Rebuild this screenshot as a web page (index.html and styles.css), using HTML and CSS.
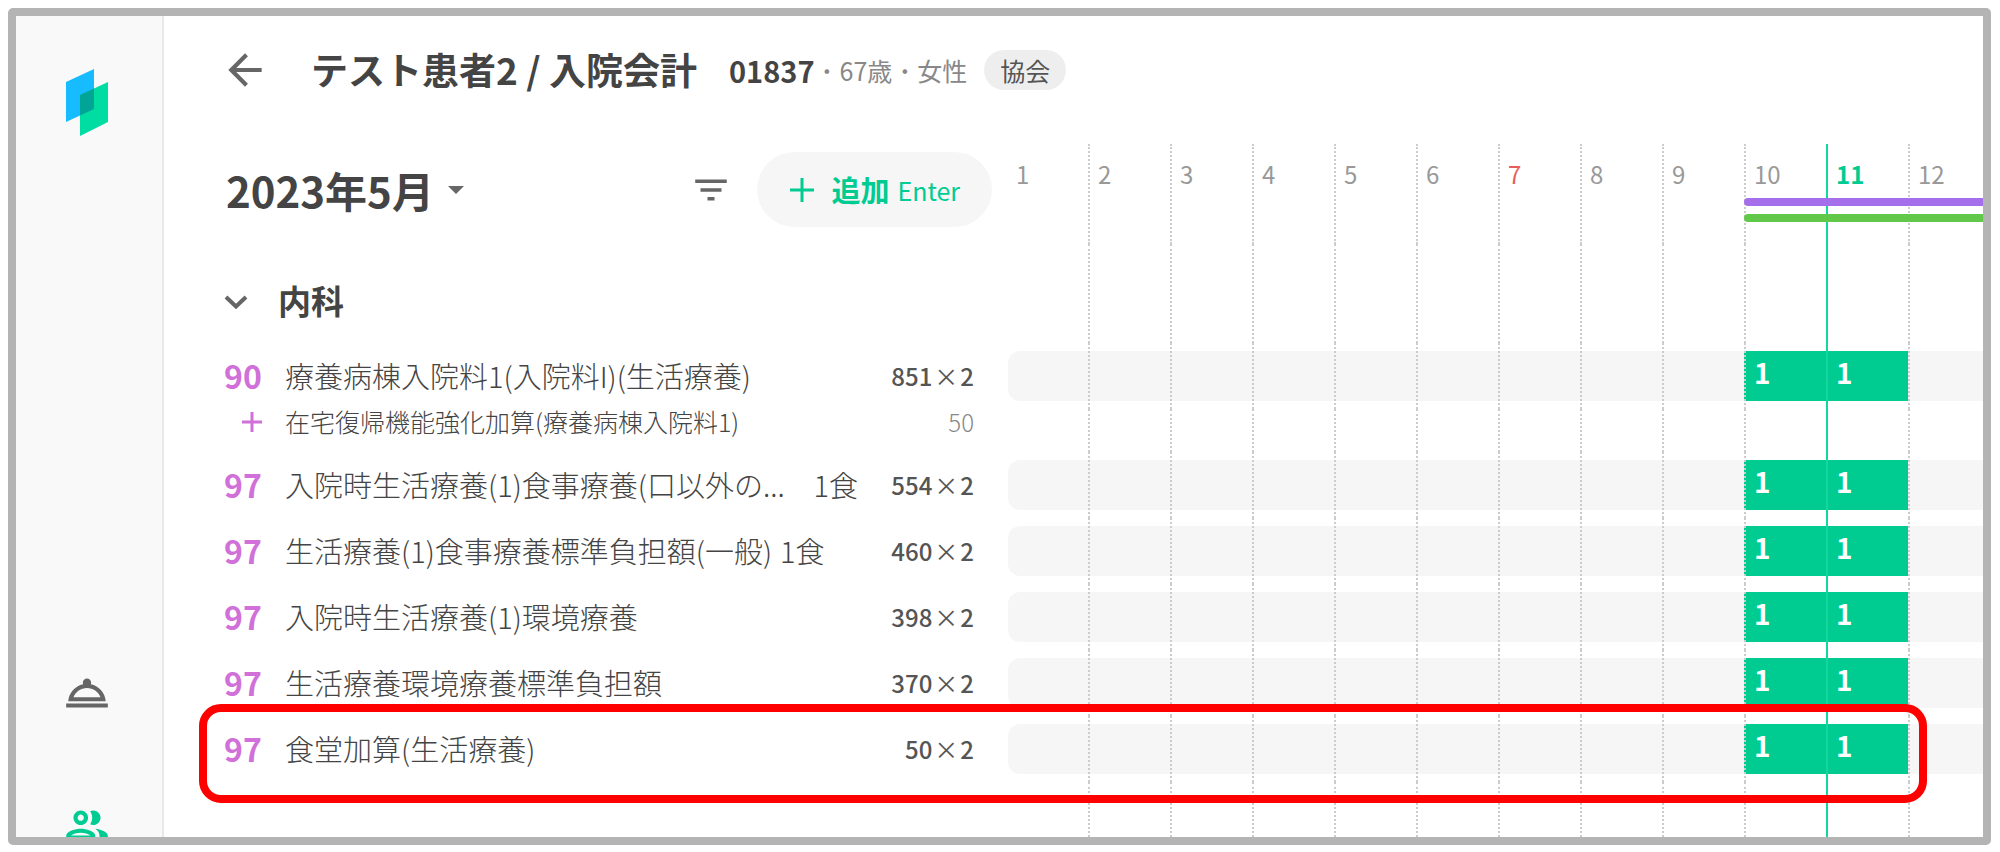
FILE: index.html
```
<!DOCTYPE html>
<html lang="ja">
  <head>
    <meta charset="UTF-8" />
    <meta name="viewport" content="width=device-width, initial-scale=1.0" />
    <title>入院会計</title>
    <link rel="stylesheet" href="styles.css">
  </head>
  <body>
    <div class="window">
      <aside class="sidebar">
        <svg class="logo" viewBox="0 0 42 67">
          <path d="M0 13L28 0v40L0 53z" fill="#17bbff" />
          <path d="M14 26L42 13v40L14 67z" fill="#00dda2" />
          <path d="M14 26L28 19.500V40L14 46.500z" fill="#00a596" />
        </svg>
        <nav class="menu">
          <a href="#" aria-label="受付">
            <svg class="icon" viewBox="0 0 24 24"><path d="M2 17h20v2H2zm11.84-9.21c.1-.24.16-.51.16-.79 0-1.1-.9-2-2-2s-2 .9-2 2c0 .28.06.55.16.79C6.25 8.6 3.27 11.93 3 16h18c-.27-4.07-3.25-7.4-7.16-8.21zM12 9.580c2.950 0 5.470 1.830 6.500 4.420h-13c1.030-2.590 3.550-4.420 6.500-4.420z" /></svg>
          </a>
          <a href="#" class="active" aria-label="患者">
            <svg class="icon" viewBox="0 0 24 24"><path d="M9 13.75c-2.34 0-7 1.17-7 3.5V19h14v-1.75c0-2.33-4.66-3.5-7-3.5zM4.34 17c.84-.58 2.87-1.25 4.66-1.25s3.82.67 4.66 1.25H4.34zM9 12c1.93 0 3.5-1.57 3.5-3.5S10.93 5 9 5 5.5 6.57 5.5 8.5 7.07 12 9 12zm0-5c.83 0 1.5.67 1.5 1.5S9.83 10 9 10s-1.5-.67-1.5-1.5S8.17 7 9 7zm7.04 6.81c1.16.84 1.96 1.96 1.96 3.44V19h4v-1.75c0-2.02-3.5-3.17-5.96-3.44zM15 12c1.93 0 3.5-1.57 3.5-3.5S16.93 5 15 5c-.54 0-1.04.13-1.5.35.63.89 1 1.98 1 3.15s-.37 2.26-1 3.15c.46.22.96.35 1.5.35z" /></svg>
          </a>
        </nav>
      </aside>
      <main>
        <header class="topbar">
          <button class="iconBtn" aria-label="戻る">
            <svg class="icon" viewBox="0 0 24 24"><path d="M20 11H7.83l5.59-5.59L12 4l-8 8 8 8 1.41-1.41L7.83 13H20v-2z" /></svg>
          </button>
          <h1>テスト患者2 / 入院会計</h1>
          <div class="patient">
            <b>01837</b><i>·</i><span>67歳</span><i>·</i><span>女性</span>
          </div>
          <span class="badge">協会</span>
        </header>
        <div class="calendar">
          <table>
            <colgroup>
              <col class="colCode" />
              <col class="colName" />
              <col class="colPoints" />
              <col class="colDay" span="11" />
              <col />
            </colgroup>
            <thead>
              <tr>
                <td class="tools" colspan="3">
                  <div class="toolbar">
                    <label class="month">
                      <select aria-label="月"><option>2023年5月</option></select>
                      <svg class="caret" viewBox="0 0 18 9"><path d="M0 0h18L9 9z" /></svg>
                    </label>
                    <button class="iconBtn filter" aria-label="絞り込み">
                      <svg viewBox="0 0 24 24"><path d="M10 18h4v-2h-4v2zM3 6v2h18V6H3zm3 7h12v-2H6v2z" /></svg>
                    </button>
                    <button class="add">
                      <svg viewBox="0 0 26 26"><path d="M11.500 1h3v10.500H25v3H14.500V25h-3V14.500H1v-3h10.500z" /></svg>
                      <b>追加</b><span>Enter</span>
                    </button>
                  </div>
                </td>
                <th>1</th>
                <th>2</th>
                <th>3</th>
                <th>4</th>
                <th>5</th>
                <th>6</th>
                <th class="sunday">7</th>
                <th>8</th>
                <th>9</th>
                <th class="stay first">10</th>
                <th class="stay today">11</th>
                <th class="stay">12</th>
              </tr>
            </thead>
            <tbody>
              <tr class="section">
                <td class="toggle">
                  <svg viewBox="0 0 24 14"><path d="M2 2l10 9.500L22 2" /></svg>
                </td>
                <td colspan="2"><h2>内科</h2></td>
                <td></td><td></td><td></td><td></td><td></td><td></td><td></td><td></td><td></td><td></td><td class="today"></td><td></td>
              </tr>
              <tr class="item">
                <td class="code">90</td>
                <td class="name">療養病棟入院料1(入院料I)(生活療養)</td>
                <td class="points">851<i>×</i>2</td>
                <td class="slot"><div></div></td><td class="slot"></td><td class="slot"></td><td class="slot"></td><td class="slot"></td><td class="slot"></td><td class="slot"></td><td class="slot"></td><td class="slot"></td><td class="slot done">1</td><td class="slot done today">1</td><td class="slot"></td>
              </tr>
              <tr class="sub">
                <td class="code"><svg viewBox="0 0 20 20"><path d="M8.500 0h3v8.500H20v3h-8.500V20h-3v-8.500H0v-3h8.500z" /></svg></td>
                <td class="name">在宅復帰機能強化加算(療養病棟入院料1)</td>
                <td class="points">50</td>
                <td></td><td></td><td></td><td></td><td></td><td></td><td></td><td></td><td></td><td></td><td class="today"></td><td></td>
              </tr>
              <tr class="item">
                <td class="code">97</td>
                <td class="name"><div class="meal wide"><span>入院時生活療養(1)食事療養(口以外の...</span><span>1食</span></div></td>
                <td class="points">554<i>×</i>2</td>
                <td class="slot"><div></div></td><td class="slot"></td><td class="slot"></td><td class="slot"></td><td class="slot"></td><td class="slot"></td><td class="slot"></td><td class="slot"></td><td class="slot"></td><td class="slot done">1</td><td class="slot done today">1</td><td class="slot"></td>
              </tr>
              <tr class="item">
                <td class="code">97</td>
                <td class="name"><div class="meal"><span>生活療養(1)食事療養標準負担額(一般)</span><span>1食</span></div></td>
                <td class="points">460<i>×</i>2</td>
                <td class="slot"><div></div></td><td class="slot"></td><td class="slot"></td><td class="slot"></td><td class="slot"></td><td class="slot"></td><td class="slot"></td><td class="slot"></td><td class="slot"></td><td class="slot done">1</td><td class="slot done today">1</td><td class="slot"></td>
              </tr>
              <tr class="item">
                <td class="code">97</td>
                <td class="name">入院時生活療養(1)環境療養</td>
                <td class="points">398<i>×</i>2</td>
                <td class="slot"><div></div></td><td class="slot"></td><td class="slot"></td><td class="slot"></td><td class="slot"></td><td class="slot"></td><td class="slot"></td><td class="slot"></td><td class="slot"></td><td class="slot done">1</td><td class="slot done today">1</td><td class="slot"></td>
              </tr>
              <tr class="item">
                <td class="code">97</td>
                <td class="name">生活療養環境療養標準負担額</td>
                <td class="points">370<i>×</i>2</td>
                <td class="slot"><div></div></td><td class="slot"></td><td class="slot"></td><td class="slot"></td><td class="slot"></td><td class="slot"></td><td class="slot"></td><td class="slot"></td><td class="slot"></td><td class="slot done">1</td><td class="slot done today">1</td><td class="slot"></td>
              </tr>
              <tr class="item marked">
                <td class="code">97</td>
                <td class="name">食堂加算(生活療養)</td>
                <td class="points">50<i>×</i>2</td>
                <td class="slot"><div></div></td><td class="slot"></td><td class="slot"></td><td class="slot"></td><td class="slot"></td><td class="slot"></td><td class="slot"></td><td class="slot"></td><td class="slot"></td><td class="slot done">1</td><td class="slot done today">1</td><td class="slot"><div class="mark"></div></td>
              </tr>
              <tr>
                <td colspan="3"></td>
                <td></td><td></td><td></td><td></td><td></td><td></td><td></td><td></td><td></td><td></td><td class="today"></td><td></td>
              </tr>
            </tbody>
          </table>
        </div>
      </main>
    </div>
  </body>
</html>
```
FILE: styles.css
```
* {
  box-sizing: border-box;
}
body {
  margin: 0;
  padding: 8px 9px 7px 8px;
  height: 100vh;
  background: #fff;
  color: #444;
  font-family: 'Noto Sans CJK JP', sans-serif;
  font-size: 24px;
}
h1, h2 {
  margin: 0;
}
button, select {
  font: inherit;
  color: inherit;
  border: none;
  background: none;
  padding: 0;
}
i {
  font-style: normal;
}
svg {
  display: block;
  fill: #666;
}
.window {
  display: flex;
  height: 100%;
  border: 8px solid #b4b4b4;
  border-radius: 5px;
  overflow: hidden;
}

/* sidebar */
.sidebar {
  display: flex;
  flex-direction: column;
  align-items: center;
  flex: 0 0 148px;
  padding: 53px 4px 0 0;
  background: #f9f9f9;
  border-right: 2px solid #e8e8e8;
}
.logo {
  width: 42px;
  height: 67px;
}
.menu {
  display: flex;
  flex-direction: column;
  gap: 82px;
  margin-top: auto;
  margin-bottom: -13px;
}
.icon {
  width: 50px;
  height: 50px;
}
.active svg {
  fill: #00cc92;
}

/* patient bar */
main {
  flex: 1;
  min-width: 0;
  display: grid;
  grid-template-rows: 128px minmax(0, 1fr);
}
.topbar {
  display: flex;
  align-items: center;
  padding: 0 56px 20px;
  white-space: nowrap;
}
h1 {
  margin: 0 32px 0 41px;
  font-size: 37px;
  line-height: 50px;
  padding-bottom: 2px;
}
.patient {
  display: flex;
  align-items: center;
  font-size: 25px;
  color: #888;
}
.patient b {
  font-size: 29px;
  color: #444;
}
.patient i {
  width: 25px;
  text-align: center;
  font-weight: bold;
}
.badge {
  margin-left: 17px;
  padding: 0 16px;
  line-height: 40px;
  border-radius: 20px;
  background: #eee;
  font-size: 25px;
  color: #555;
}

/* calendar */
table {
  width: 100%;
  height: 100%;
  table-layout: fixed;
  border-collapse: separate;
  border-spacing: 0;
}
th, td {
  padding: 0;
}
.colCode {
  width: 121px;
}
.colName {
  width: 573px;
}
.colPoints {
  width: 148px;
}
.colDay {
  width: 82px;
}
thead tr {
  height: 100px;
}
th {
  position: relative;
  padding: 13px 0 0 8px;
  text-align: left;
  vertical-align: top;
  font-weight: normal;
  line-height: 34px;
  color: #999;
}
.tools + th {
  padding-left: 10px;
}
th + th,
td:nth-last-child(-n+11) {
  border-left: 2px dotted #ccc;
}
.sunday {
  color: #e85c5c;
}
th.today {
  color: #00cc92;
  font-weight: bold;
}
th.today,
td.today {
  border-left: 2px solid #14d79d;
}
.stay::before,
.stay::after {
  content: '';
  position: absolute;
  left: -2px;
  right: 0;
  top: 54px;
  height: 8px;
  background: #a56eeb;
}
.stay::after {
  top: 70px;
  background: #62c84a;
}
.first::before,
.first::after {
  border-radius: 4px 0 0 4px;
}
.tools {
  vertical-align: top;
}
.toolbar {
  display: flex;
  align-items: center;
  padding: 8px 14px 0 62px;
}
.month {
  display: flex;
  align-items: center;
  gap: 14px;
  font-size: 42px;
  font-weight: bold;
}
.month select {
  appearance: none;
  line-height: 58px;
}
.caret {
  width: 16px;
  height: 8px;
}
.filter {
  margin-left: auto;
  margin-right: 25px;
}
.filter svg {
  width: 42px;
  height: 42px;
}
.add {
  display: flex;
  align-items: center;
  height: 75px;
  padding: 0 32px;
  border-radius: 38px;
  background: #f6f6f6;
  color: #00cc92;
}
.add svg {
  width: 26px;
  height: 26px;
  margin-right: 16px;
  fill: #00cc92;
}
.add b {
  margin-right: 8px;
  padding-bottom: 2px;
  font-size: 29px;
}
.add span {
  font-size: 25px;
}

/* rows */
.section {
  height: 99px;
}
.toggle {
  padding-left: 60px;
}
.toggle svg {
  width: 24px;
  height: 14px;
  margin-top: 16px;
  fill: none;
  stroke: #666;
  stroke-width: 4px;
}
h2 {
  padding: 12px 0 0;
  margin-left: -7px;
  font-size: 33px;
  line-height: 46px;
}
.item {
  height: 66px;
}
.sub {
  height: 43px;
}
.code {
  padding-left: 60px;
  font-size: 32px;
  font-weight: bold;
  line-height: 46px;
  color: #d070d8;
}
.code svg {
  width: 20px;
  height: 20px;
  margin-left: 18px;
  fill: #d070d8;
}
.name {
  font-size: 29px;
  font-weight: 300;
  line-height: 42px;
  white-space: nowrap;
}
.item .code,
.item .name {
  padding-bottom: 2px;
}
.meal {
  display: flex;
  gap: 8px;
}
.wide {
  justify-content: space-between;
}
.points {
  padding-right: 32px;
  text-align: right;
  font-weight: 500;
  line-height: 36px;
  color: #555;
}
.points i {
  margin: 0 2px;
  font-weight: normal;
}
.sub td {
  padding-bottom: 18px;
}
.sub .name {
  font-size: 25px;
  line-height: 25px;
}
.sub .points {
  font-weight: 300;
  line-height: 25px;
  color: #888;
}
.slot {
  background: linear-gradient(#f6f6f6, #f6f6f6) center / 100% 50px no-repeat border-box;
}
.points + .slot {
  background: none;
}
.points + .slot div {
  height: 50px;
  margin-left: 2px;
  background: #f6f6f6;
  border-radius: 12px 0 0 12px;
}
.done {
  padding: 0 0 8px 8px;
  font-size: 28px;
  font-weight: bold;
  line-height: 40px;
  color: #fff;
  background-image: linear-gradient(#00cc92, #00cc92);
}
.marked {
  position: relative;
}
.mark {
  position: absolute;
  top: -12px;
  bottom: -21px;
  left: 35px;
  right: 56px;
  border: 8px solid #f00;
  border-radius: 22px;
}
```
